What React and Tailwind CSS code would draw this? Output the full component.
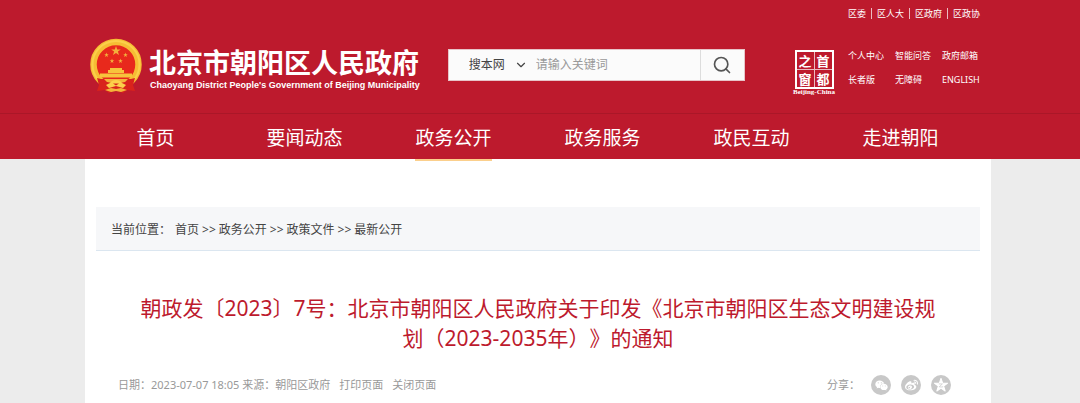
import React, { useState } from 'react';
import { ChevronDown, Search } from 'lucide-react';
import { FaWeixin, FaWeibo } from 'react-icons/fa';

const topLinks = ['区委', '区人大', '区政府', '区政协'];
const quickLinks = ['个人中心', '智能问答', '政府邮箱', '长者版', '无障碍', 'ENGLISH'];
const crumbs = ['首页', '政务公开', '政策文件', '最新公开'];
const navigationLinks = [
  { label: '首页' },
  { label: '要闻动态' },
  { label: '政务公开', active: true },
  { label: '政务服务' },
  { label: '政民互动' },
  { label: '走进朝阳' }
];

const STAR = 'M0 -10 L2.4 -3.1 L9.5 -3.1 L3.8 1.2 L5.9 8.1 L0 4 L-5.9 8.1 L-3.8 1.2 L-9.5 -3.1 L-2.4 -3.1 Z';

const Emblem = () => (
  <svg viewBox="0 0 52 56" className="h-14 w-[52px] shrink-0" aria-hidden="true">
    <circle cx="26" cy="26.5" r="22.5" fill="#e8291c" stroke="#f6bd34" strokeWidth="6.5" />
    <circle cx="26" cy="26.5" r="23.5" fill="none" stroke="#fbd04a" strokeWidth="2" />
    <g fill="#f3b13c">
      <path d={STAR} transform="translate(26 13) scale(.5)" />
      <path d={STAR} transform="translate(16.5 17) scale(.24)" />
      <path d={STAR} transform="translate(35.5 17) scale(.24)" />
      <path d={STAR} transform="translate(22 23) scale(.24)" />
      <path d={STAR} transform="translate(30.5 23) scale(.24)" />
    </g>
    <path d="M20 30h12v2h2v3H18v-3h2z" fill="#f7c43c" />
    <path d="M10 35.5h32v4H10z" fill="#f7c43c" />
    <path d="M7 40c6 2 9 0 13 2l6 2 6-2c4-2 7 0 13-2l-2 7 2 6-8-1-4 3-7-3-7 3-4-3-8 1 2-6z" fill="#d9231c" />
    <path d="M14 41h24l-3 3-5 1-4 1-4-1-5-1z" fill="#f4b53a" />
    <path d="M20 45c2-4 10-4 12 0l4 2-3 3-7-2-7 2-3-3z" fill="#fbd04a" />
    <path d="M23 45.5h6l-3 2z" fill="#d9231c" />
    <path d="M15 52l6-2 5 1 5-1 6 2-6 2-5-1-5 1z" fill="#f4b53a" />
  </svg>
);

const CapitalWindow = () => (
  <a href="#capital" className="mt-1.5 flex w-11 shrink-0 flex-col items-center text-white">
    <span className="grid grid-cols-2 gap-px border-2 border-white bg-white/70 font-['Noto_Sans_CJK_SC',sans-serif] text-[13px] font-bold leading-4">
      {['之', '首', '窗', '都'].map((char) => (
        <span key={char} className="flex h-[17px] w-[17px] items-center justify-center bg-[#bd1a2d]">{char}</span>
      ))}
    </span>
    <span className="font-['Liberation_Serif',serif] text-[7px] font-bold leading-[7px]">Beijing-China</span>
  </a>
);

const QzoneIcon = () => (
  <svg viewBox="-10 -10.5 20 20" className="h-[14px] w-[14px]" aria-hidden="true">
    <path d={STAR} fill="#fff" stroke="#fff" strokeWidth="1.5" strokeLinejoin="round" />
    <path d="M-3 -2h5l-4.500 4q3 .8 5.500 0" fill="none" stroke="#c8c8c8" strokeWidth="1" />
  </svg>
);

const shareLinks = [
  { label: '微信', icon: <FaWeixin className="h-[13px] w-[13px]" /> },
  { label: '微博', icon: <FaWeibo className="h-[13px] w-[13px]" /> },
  { label: 'QQ空间', icon: <QzoneIcon /> }
];

const SearchBar = () => {
  const [keyword, setKeyword] = useState('');

  return (
    <form
      className="flex h-8 w-[297px] border border-[#e7c5c9] bg-[#fbfbfb] text-xs text-[#444]"
      onSubmit={(e) => e.preventDefault()}
    >
      <div className="grid w-[87px] items-center pl-5">
        <select aria-label="搜索范围" className="col-start-1 row-start-1 h-full w-full appearance-none bg-transparent outline-none">
          <option>搜本网</option>
        </select>
        <ChevronDown className="pointer-events-none col-start-1 row-start-1 mr-2 h-[14px] w-[14px] justify-self-end" />
      </div>
      <input
        type="text"
        aria-label="关键词"
        placeholder="请输入关键词"
        value={keyword}
        onChange={(e) => setKeyword(e.target.value)}
        className="min-w-0 flex-1 bg-transparent outline-none placeholder:text-[#999]"
      />
      <button type="submit" aria-label="搜索" className="flex w-11 items-center justify-center border-l border-[#ddd] text-[#555]">
        <Search className="h-5 w-5" />
      </button>
    </form>
  );
};

const Header = () => (
  <header className="bg-[#bd1a2d] text-white">
    <div className="pr-1">
      <div className="mx-auto max-w-[906px]">
        <ul className="flex h-[26px] items-center justify-end divide-x divide-white/70 pr-1.5 text-[9px] leading-[11px]">
          {topLinks.map((label) => (
            <li key={label} className="px-[5px]">
              <a href="#top">{label}</a>
            </li>
          ))}
        </ul>
        <div className="flex h-[87px] items-start pl-[5px]">
          <a href="#home" className="mt-3 flex shrink-0 items-start">
            <Emblem />
            <span className="ml-[7px] flex flex-col pt-1">
              <span className="font-['Noto_Sans_CJK_SC',sans-serif] text-[27px] font-bold leading-[39px]">北京市朝阳区人民政府</span>
              <span className="pl-px font-['Liberation_Sans',sans-serif] text-[9px] font-bold leading-2">
                Chaoyang District People's Government of Beijing Municipality
              </span>
            </span>
          </a>
          <div className="ml-7 mt-[23px]">
            <SearchBar />
          </div>
          <div className="ml-auto mt-[18px] flex items-start gap-3">
            <CapitalWindow />
            <ul className="grid grid-cols-[47px_47px_49px] text-[9px] leading-6">
              {quickLinks.map((label) => (
                <li key={label}>
                  <a href="#quick">{label}</a>
                </li>
              ))}
            </ul>
          </div>
        </div>
      </div>
    </div>
    <nav className="border-t border-[#aa1728] pr-6">
      <ul className="mx-auto grid h-[45px] max-w-[894px] grid-cols-6">
        {navigationLinks.map(({ label, active }) => (
          <li key={label} className="flex justify-center">
            <a href="#nav" className="relative flex items-center pt-[3px] text-[19px]">
              {label}
              {active && <span className="absolute inset-x-0 -bottom-0.5 h-0.5 bg-[#fbcf8c]" />}
            </a>
          </li>
        ))}
      </ul>
    </nav>
  </header>
);

const Article = () => (
  <main className="flex flex-1 pr-1">
    <div className="mx-auto w-full max-w-[906px] bg-white px-[11px] pb-2 pt-12">
      <nav aria-label="当前位置" className="flex h-11 items-center border-b border-[#dbe6f0] bg-[#f6f7f9] px-[15px] pt-0.5 text-xs text-[#444]">
        <span className="mr-1">当前位置：</span>
        {crumbs.map((label, index) => (
          <React.Fragment key={label}>
            {index > 0 && <span className="px-[3px]">&gt;&gt;</span>}
            <a href="#crumb">{label}</a>
          </React.Fragment>
        ))}
      </nav>
      <h1 className="mt-[42px] px-9 text-center text-[21px] leading-[30px] text-[#bd1a2d] [text-spacing-trim:space-all]">
        朝政发〔2023〕7号：北京市朝阳区人民政府关于印发《北京市朝阳区生态文明建设规划（2023-2035年）》的通知
      </h1>
      <div className="mt-[22px] flex items-center justify-between pl-[22px] pr-[29px] text-[11px] leading-5 text-[#999]">
        <div className="flex">
          <span>日期：2023-07-07 18:05 来源：朝阳区政府</span>
          <button type="button" className="ml-[9px]">打印页面</button>
          <button type="button" className="ml-[9px]">关闭页面</button>
        </div>
        <div className="flex items-center gap-[10px]">
          <span className="mr-px">分享：</span>
          {shareLinks.map(({ label, icon }) => (
            <a key={label} href="#share" aria-label={label} className="flex h-5 w-5 items-center justify-center rounded-full bg-[#c8c8c8] text-white">
              {icon}
            </a>
          ))}
        </div>
      </div>
    </div>
  </main>
);

const App = () => (
  <div className="flex min-h-screen flex-col bg-[#ececec] font-['Noto_Sans','Noto_Sans_CJK_SC',sans-serif]">
    <Header />
    <Article />
  </div>
);

export default App;
